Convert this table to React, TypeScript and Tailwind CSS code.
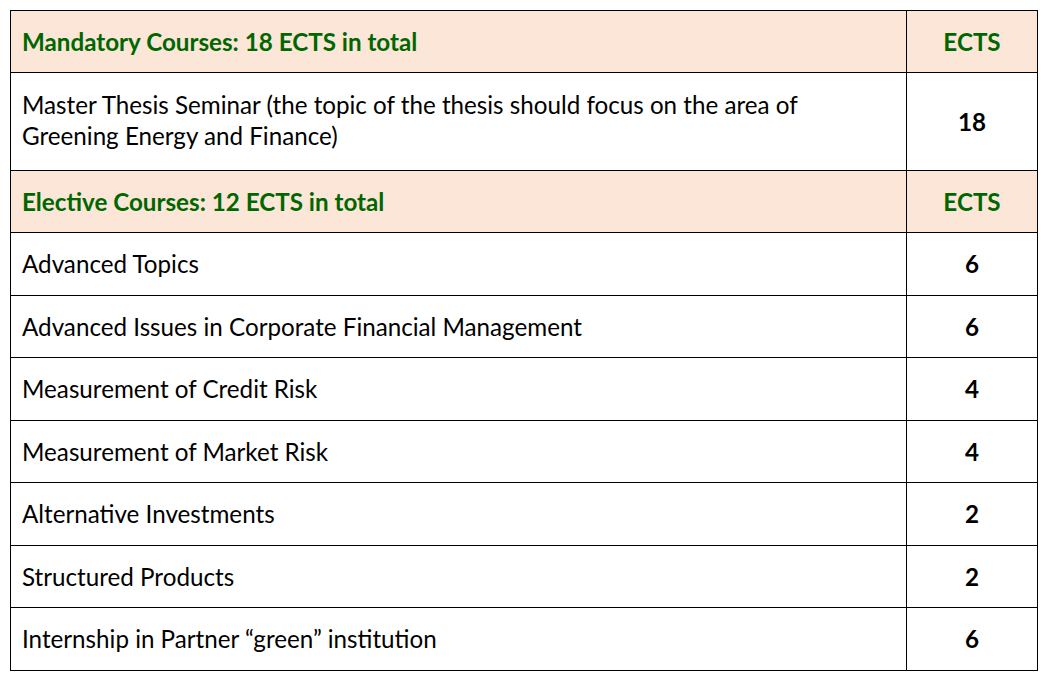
const courses: { name: string; ects: number }[] = [
  { name: "Advanced Topics", ects: 6 },
  { name: "Advanced Issues in Corporate Financial Management", ects: 6 },
  { name: "Measurement of Credit Risk", ects: 4 },
  { name: "Measurement of Market Risk", ects: 4 },
  { name: "Alternative Investments", ects: 2 },
  { name: "Structured Products", ects: 2 },
  { name: "Internship in Partner \u201cgreen\u201d institution", ects: 6 },
];

function HeaderRow({ title }: { title: string }) {
  return (
    <tr className="h-[62px] bg-[#fbe6d8]">
      <td className="border border-black px-[11px] font-bold text-[#006600]">{title}</td>
      <td className="border border-black text-center font-bold text-[#006600]">ECTS</td>
    </tr>
  );
}

function CourseRow({ name, ects }: { name: string; ects: number }) {
  return (
    <tr className="h-[62.5px]">
      <td className="border border-black px-[11px]">{name}</td>
      <td className="border border-black text-center font-bold">{ects}</td>
    </tr>
  );
}

export default function App() {
  return (
    <div className="w-[1051px] h-[681px] bg-white pt-[10px] pl-[10px] text-black font-['Lato',sans-serif] text-[24.2px] leading-[31px]">
      <table className="border-collapse w-[1027px] table-fixed">
        <colgroup>
          <col className="w-[896px]" />
          <col className="w-[131px]" />
        </colgroup>
        <tbody>
          <HeaderRow title="Mandatory Courses: 18 ECTS in total" />
          <tr className="h-[98px]">
            <td className="border border-black px-[11px] pb-[3px]">
              Master Thesis Seminar (the topic of the thesis should focus on the area of
              <br />
              Greening Energy and Finance)
            </td>
            <td className="border border-black text-center font-bold">18</td>
          </tr>
          <HeaderRow title="Elective Courses: 12 ECTS in total" />
          {courses.map((c) => (
            <CourseRow key={c.name} name={c.name} ects={c.ects} />
          ))}
        </tbody>
      </table>
    </div>
  );
}
